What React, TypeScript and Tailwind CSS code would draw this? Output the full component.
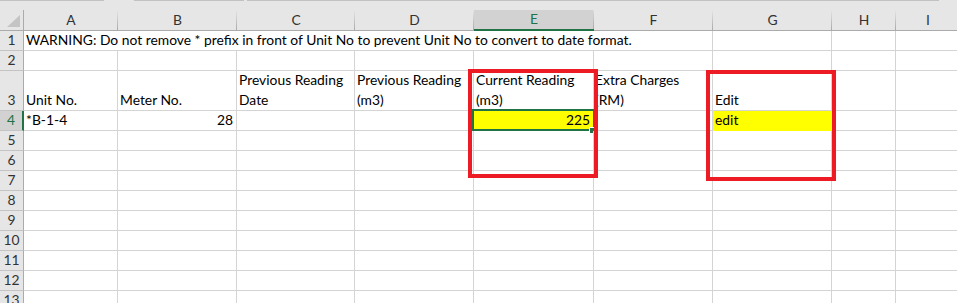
import React from "react";

const COLS = [
  { k: "A", w: 94 },
  { k: "B", w: 119 },
  { k: "C", w: 118 },
  { k: "D", w: 119 },
  { k: "E", w: 120 },
  { k: "F", w: 119 },
  { k: "G", w: 119 },
  { k: "H", w: 64 },
  { k: "I", w: 64 },
];

const grid = "grid grid-cols-[24px_94px_119px_118px_119px_120px_119px_119px_64px_64px]";

function RowHead({ n, h = "h-[20px]", active = false }: { n: number; h?: string; active?: boolean }) {
  return (
    <div
      className={`${h} flex items-end justify-center leading-[20px] ${
        active
          ? "bg-[#d2d2d2] text-[#217346] border-r-2 border-r-[#217346]"
          : "bg-[#e6e6e6] text-[#333] border-r border-r-[#ababab]"
      } border-b border-b-[#c4c4c4]`}
    >
      {n}
    </div>
  );
}

function Cell({
  children,
  right = false,
  className = "",
}: {
  children?: React.ReactNode;
  right?: boolean;
  className?: string;
}) {
  return (
    <div
      className={`relative flex items-end whitespace-nowrap border-b border-r border-[#d4d4d4] px-[2px] leading-[20px] ${
        right ? "justify-end" : ""
      } ${className}`}
    >
      {children}
    </div>
  );
}

function EmptyRow({ n }: { n: number }) {
  return (
    <>
      <RowHead n={n} />
      {COLS.map((c) => (
        <Cell key={c.k} className="h-[20px]" />
      ))}
    </>
  );
}

export default function App() {
  return (
    <div className="relative h-[303px] w-[957px] overflow-hidden bg-white font-['Lato','Liberation_Sans',sans-serif] text-[13.85px] text-black">
      {/* strip under the formula bar */}
      <div className="flex h-[10px] bg-[#e6e6e6]">
        <div className="h-px w-[104px] bg-[#c2c2c2]" />
        <div className="ml-[30px] h-px w-[110px] bg-[#c2c2c2]" />
        <div className="ml-[3px] h-px w-[692px] bg-[#c2c2c2]" />
      </div>

      <div className={grid}>
        {/* column header */}
        <div className="relative h-[21px] border-b border-[#ababab] bg-[#e6e6e6]">
          <svg className="absolute left-0 top-0" width="24" height="20">
            <polygon points="20,5 20,17 7,17" fill="#c4c4c4" />
          </svg>
          <span className="absolute right-0 top-0 h-full w-px bg-[#ababab]" />
        </div>
        {COLS.map((c) =>
          c.k === "E" ? (
            <div
              key={c.k}
              className="relative flex h-[21px] items-center justify-center border-b-2 border-[#217346] bg-[#d2d2d2] text-[#217346]"
            >
              {c.k}
              <span className="absolute right-0 top-0 h-full w-px bg-gradient-to-b from-[#dcdcdc] to-[#a9a9a9]" />
            </div>
          ) : (
            <div
              key={c.k}
              className="relative flex h-[21px] items-center justify-center border-b border-[#ababab] bg-[#e6e6e6] text-[#333]"
            >
              {c.k}
              <span className="absolute right-0 top-0 h-full w-px bg-gradient-to-b from-[#e6e6e6] to-[#a9a9a9]" />
            </div>
          ),
        )}

        {/* row 1 */}
        <RowHead n={1} />
        <Cell className="col-span-6 h-[20px]">
          WARNING: Do not remove * prefix in front of Unit No to prevent Unit No to convert to date format.
        </Cell>
        <Cell className="h-[20px]" />
        <Cell className="h-[20px]" />
        <Cell className="h-[20px]" />

        {/* row 2 */}
        <EmptyRow n={2} />

        {/* row 3 */}
        <RowHead n={3} h="h-[40px]" />
        <Cell className="h-[40px]">Unit No.</Cell>
        <Cell className="h-[40px]">Meter No.</Cell>
        <Cell className="h-[40px]">
          <span>
            Previous Reading
            <br />
            Date
          </span>
        </Cell>
        <Cell className="h-[40px]">
          <span>
            Previous Reading
            <br />
            (m3)
          </span>
        </Cell>
        <Cell className="h-[40px]">
          <span>
            Current Reading
            <br />
            (m3)
          </span>
        </Cell>
        <Cell className="h-[40px] pl-[1px]">
          <span>
            Extra Charges
            <br />
            (RM)
          </span>
        </Cell>
        <Cell className="h-[40px]">Edit</Cell>
        <Cell className="h-[40px]" />
        <Cell className="h-[40px]" />

        {/* row 4 */}
        <RowHead n={4} active />
        <Cell className="h-[20px]">*B-1-4</Cell>
        <Cell className="h-[20px] pr-[3px]" right>
          28
        </Cell>
        <Cell className="h-[20px]" />
        <Cell className="h-[20px]" />
        <Cell className="h-[20px] bg-[#ffff00] pr-[3px]" right>
          225
          <span className="absolute -left-[2px] -top-[2px] h-[22px] w-[123px] border-2 border-[#217346]" />
          <span className="absolute left-[115px] top-[16px] h-[7px] w-[7px] border border-white bg-[#217346]" />
        </Cell>
        <Cell className="h-[20px]" />
        <Cell className="h-[20px] border-[#ffff00] bg-[#ffff00]">edit</Cell>
        <Cell className="h-[20px]" />
        <Cell className="h-[20px]" />

        {[5, 6, 7, 8, 9, 10, 11, 12, 13].map((n) => (
          <EmptyRow key={n} n={n} />
        ))}
      </div>

      {/* red highlight boxes drawn over the sheet */}
      <div className="absolute left-[468px] top-[69px] h-[109px] w-[130px] border-4 border-[#ed1c24]" />
      <div className="absolute left-[706px] top-[70px] h-[111px] w-[130px] border-4 border-[#ed1c24]" />
    </div>
  );
}
